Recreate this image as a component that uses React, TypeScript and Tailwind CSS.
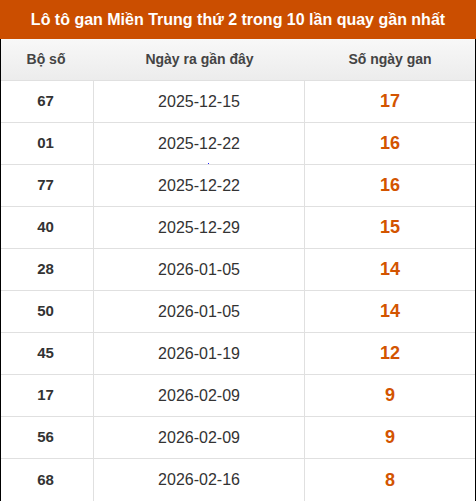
import React from "react";

const rows: [string, string, string][] = [
  ["67", "2025-12-15", "17"],
  ["01", "2025-12-22", "16"],
  ["77", "2025-12-22", "16"],
  ["40", "2025-12-29", "15"],
  ["28", "2026-01-05", "14"],
  ["50", "2026-01-05", "14"],
  ["45", "2026-01-19", "12"],
  ["17", "2026-02-09", "9"],
  ["56", "2026-02-09", "9"],
  ["68", "2026-02-16", "8"],
];

export default function App() {
  return (
    <div
      className="w-[476px] h-[501px] bg-white relative"
      style={{ fontFamily: '"Liberation Sans", Arial, sans-serif' }}
    >
      <div className="h-[39px] bg-[#cb4e00] flex items-center justify-center text-white font-bold text-[16px]">
        Lô tô gan Miền Trung thứ 2 trong 10 lần quay gần nhất
      </div>
      <div className="border-l border-r border-b border-black">
        <div className="h-[42px] flex border-b border-[#e0e0e0] bg-gradient-to-b from-[#f8f8f8] to-[#ececec] text-[14px] font-bold text-[#444]">
          <div className="w-[93px] flex items-center justify-center pr-[3px]">Bộ số</div>
          <div className="w-[211px] flex items-center justify-center">Ngày ra gần đây</div>
          <div className="flex-1 flex items-center justify-center">Số ngày gan</div>
        </div>
        {rows.map((r, i) => (
          <div
            key={i}
            className={
              "h-[42px] flex " + (i < rows.length - 1 ? "border-b border-[#e0e0e0]" : "h-[41px]")
            }
          >
            <div className="w-[93px] border-r border-[#e0e0e0] flex items-center justify-center pr-[3px] text-[15px] font-bold text-[#333]">
              {r[0]}
            </div>
            <div className="w-[211px] border-r border-[#e0e0e0] flex items-center justify-center text-[16px] text-[#333]">
              {r[1]}
            </div>
            <div className="flex-1 flex items-center justify-center text-[18px] font-bold text-[#d35400]">
              {r[2]}
            </div>
          </div>
        ))}
      </div>
      <div className="absolute left-[208px] top-[163px] w-px h-px bg-[#2020ff]" />
    </div>
  );
}
